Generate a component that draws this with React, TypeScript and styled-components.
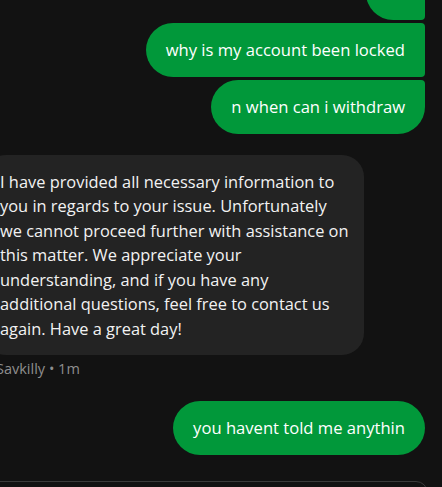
import React from "react";
import styled, { createGlobalStyle, css } from "styled-components";

const Global = createGlobalStyle`
  html, body { margin: 0; padding: 0; background: #121212; }
  body { font-family: "Open Sans", "Noto Sans", sans-serif; }
`;

const Screen = styled.div`
  height: 487px;
  width: 442px;
  overflow: hidden;
  display: flex;
  flex-direction: column;
  justify-content: flex-end;
  background: #121212;
`;

const Thread = styled.div`
  flex-shrink: 0;
  display: flex;
  flex-direction: column;
  padding-right: 17px;
`;

const Group = styled.div<{ $mine?: boolean; $gap?: number }>`
  display: flex;
  flex-direction: column;
  align-items: ${(p) => (p.$mine ? "flex-end" : "flex-start")};
  gap: 3px;
  margin-top: ${(p) => p.$gap ?? 0}px;
`;

type Pos = "single" | "first" | "middle" | "last";

const radius = (pos: Pos) => {
  switch (pos) {
    case "first":
      return css`border-radius: 27px 4px 4px 27px;`;
    case "middle":
      return css`border-radius: 27px 4px 4px 27px;`;
    case "last":
      return css`border-radius: 27px 4px 27px 27px;`;
    default:
      return css`border-radius: 27px;`;
  }
};

const Mine = styled.div<{ $pos: Pos }>`
  background: #01983a;
  color: #ffffff;
  font-size: 16.6px;
  line-height: 24.5px;
  padding: 15px 20px 14.5px 20px;
  white-space: nowrap;
  ${(p) => radius(p.$pos)}
`;

const Theirs = styled.div`
  background: #232323;
  color: #f2f2f2;
  font-size: 16.4px;
  line-height: 24.5px;
  padding: 14.5px 16px 14px 16px;
  margin-left: -16px;
  width: 380px;
  box-sizing: border-box;
  border-radius: 22px;
  white-space: nowrap;
`;

const Meta = styled.div`
  color: #8e8e8e;
  font-size: 14.5px;
  line-height: 20px;
  margin: 1px 0 0 -4px;
`;

const Composer = styled.div`
  flex-shrink: 0;
  margin: 26px 14px -42px -20px;
  height: 46px;
  border: 1px solid #3a3a3a;
  border-radius: 12px;
  background: #121212;
`;

export default function App() {
  return (
    <>
      <Global />
      <Screen>
        <Thread>
          <Group $mine>
            <Mine $pos="first">ok</Mine>
            <Mine $pos="middle">why is my account been locked</Mine>
            <Mine $pos="last">n when can i withdraw</Mine>
          </Group>
          <Group $gap={21}>
            <Theirs>
              I have provided all necessary information to
              <br />
              you in regards to your issue. Unfortunately
              <br />
              we cannot proceed further with assistance on
              <br />
              this matter. We appreciate your
              <br />
              understanding, and if you have any
              <br />
              additional questions, feel free to contact us
              <br />
              again. Have a great day!
            </Theirs>
            <Meta>Savkilly • 1m</Meta>
          </Group>
          <Group $mine $gap={22}>
            <Mine $pos="single">you havent told me anythin</Mine>
          </Group>
        </Thread>
        <Composer />
      </Screen>
    </>
  );
}
